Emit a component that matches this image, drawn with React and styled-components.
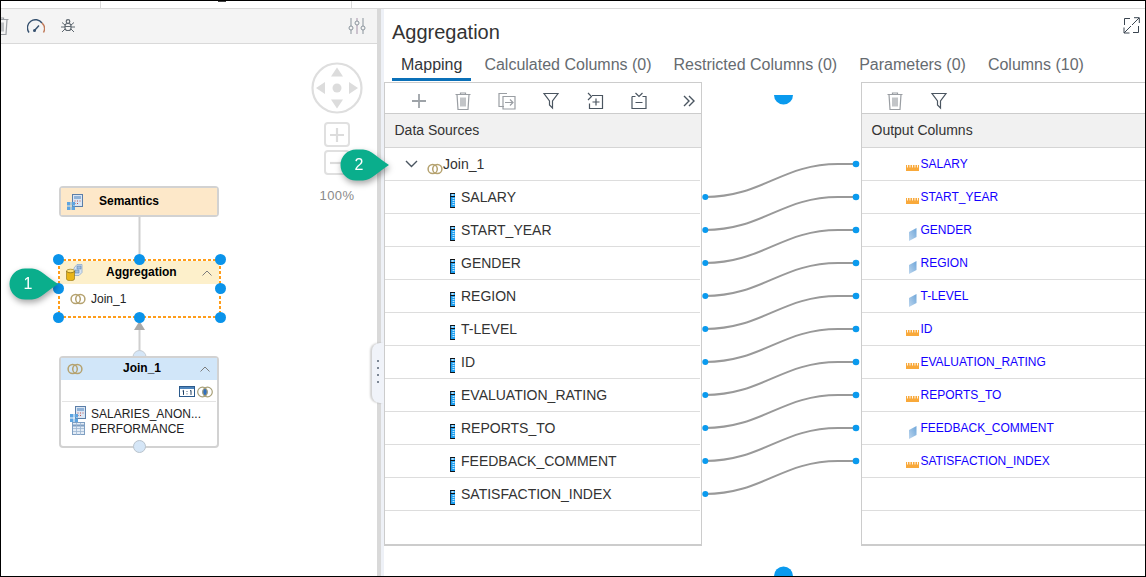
import React from "react";
import styled, { createGlobalStyle } from "styled-components";

const Global = createGlobalStyle`
  html, body { margin: 0; padding: 0; background: #fff; overflow: hidden; }
  * { box-sizing: border-box; }
`;

const Frame = styled.div`
  width: 1146px; height: 577px; border: 1px solid #000; display: flex; flex-direction: column;
  position: relative; overflow: hidden; background: #fff; color: #333;
  font-family: "Liberation Sans", Arial, sans-serif;
`;
const TopStrip = styled.div`
  height: 8px; flex: none; display: flex; border-bottom: 1px solid #d9d9d9;
`;
const TopCell = styled.div`
  width: ${p => p.$w}px; border-right: 1px solid #d9d9d9; display: flex; justify-content: center;
  &:last-child { border-right: 0; flex: 1; }
`;
const TopMark = styled.span`
  width: 8px; height: 1px; margin-right: 8px; background: #444;
`;
const Main = styled.div`
  flex: 1; min-height: 0; display: flex; position: relative;
`;
const LeftPanel = styled.section`
  width: 376px; flex: none; display: flex; flex-direction: column; overflow: hidden;
`;
const CanvasBar = styled.div`
  height: 35px; flex: none; display: flex; align-items: center; gap: 16px; padding: 0 11px 0 0;
  background: #f4f4f4; border-bottom: 1px solid #d9d9d9;
  & > svg:first-child { margin-left: -10px; }
  & > svg:last-child { margin-left: auto; }
`;
const Canvas = styled.div`
  flex: 1; position: relative;
`;
const EdgeLayer = styled.svg`
  position: absolute; left: 0; top: 0; width: 376px; height: 531px;
`;
const NavGroup = styled.div`
  position: absolute; left: 310px; top: 18px; width: 52px; display: flex; flex-direction: column;
  align-items: center;
`;
const ZoomBtn = styled.div`
  width: 26px; height: 25px; margin-top: ${p => p.$mt}px; border: 2px solid #e0e0e0; border-radius: 4px;
  display: flex; align-items: center; justify-content: center;
`;
const ZoomLabel = styled.div`
  margin-top: 13px; font-size: 13px; line-height: 16px; letter-spacing: .4px; color: #8a8a8a;
`;
const Node = styled.div`
  position: absolute; left: ${p => p.$x}px; top: ${p => p.$y}px; width: 160px; height: ${p => p.$h}px;
  border: 2px solid #d2d2d2; border-radius: 4px; background: #fff; display: flex; flex-direction: column;
`;
const NodeHead = styled.div`
  height: ${p => p.$h}px; flex: none; background: ${p => p.$bg}; display: flex; align-items: center;
  padding: 0 6px; position: relative; font-size: 12px; font-weight: 700; color: #000;
`;
const NodeTitle = styled.span`
  position: absolute; left: ${p => p.$left}px; line-height: 14px; margin-top: -2px;
`;
const NodeChevron = styled.svg`
  position: absolute; right: 7px; top: 50%; margin-top: -3px;
`;
const SelectedNode = styled(Node)`
  width: 163px; border: 0; border-radius: 0; padding: 2px;
  background:
    linear-gradient(90deg, #ff9d19 60%, transparent 0) 0 0 / 5px 2px repeat-x,
    linear-gradient(90deg, #ff9d19 60%, transparent 0) 0 100% / 5px 2px repeat-x,
    linear-gradient(0deg, #ff9d19 60%, transparent 0) 0 0 / 2px 5px repeat-y,
    linear-gradient(0deg, #ff9d19 60%, transparent 0) 100% 0 / 2px 5px repeat-y,
    #fff;
`;
const NodeLine = styled.div`
  display: flex; align-items: center; gap: 5px; padding-left: ${p => p.$pl}px; height: ${p => p.$h}px;
  font-size: 12px; color: #222;
`;
const NodeIcons = styled.div`
  display: flex; justify-content: flex-end; align-items: center; gap: 2px; height: 22px; padding: 2px 3px 0 0;
  margin: 0 1px; border-bottom: 1px solid #e4e4e4;
`;
const NodeList = styled.div`
  padding-top: 4px;
`;
const TableSlot = styled.span`
  width: 16px; display: flex; justify-content: center;
`;
const Handle = styled.span`
  position: absolute; left: ${p => p.$x - 5}px; top: ${p => p.$y - 5}px; width: 11px; height: 11px;
  border-radius: 50%; background: #0a93ea;
`;
const Port = styled.span`
  position: absolute; left: 132px; top: 396px; width: 13px; height: 13px; border-radius: 50%;
  background: #d5e6f7; border: 1px solid #b9c3cc;
`;
const Splitter = styled.div`
  width: 7px; flex: none; background: linear-gradient(90deg, #d9d9d9 0 4px, #eef1f7 4px);
`;
const Grip = styled.div`
  position: absolute; left: 371px; top: 334px; width: 12px; height: 60px; background: #f0f3f9;
  border-radius: 8px 0 0 8px; box-shadow: -2px 0 2px rgba(0,0,0,.18); display: flex; flex-direction: column;
  align-items: center; justify-content: center; gap: 5px; padding-bottom: 4px;
`;
const GripDot = styled.i`
  width: 2px; height: 2px; background: #7d8794; display: block;
`;
const RightPanel = styled.section`
  flex: 1; min-width: 0; display: flex; flex-direction: column; position: relative; overflow: hidden;
`;
const Title = styled.h1`
  margin: 11px 0 0 8px; font-size: 20px; line-height: 24px; font-weight: 400; color: #333;
`;
const Expand = styled.svg`
  position: absolute; right: 5px; top: 8px;
`;
const Tabs = styled.nav`
  display: flex; gap: 4px; margin: 6px 0 1px 8px; height: 31px;
`;
const Tab = styled.div`
  padding: 5px 9px 0; font-size: 16px; line-height: 19px; color: ${p => p.$on ? "#32363a" : "#666b70"};
  border-bottom: 3px solid ${p => p.$on ? "#0a70b8" : "transparent"};
`;
const Mapping = styled.div`
  flex: 1; min-height: 0; display: flex; align-items: flex-start;
`;
const MapTable = styled.div`
  width: ${p => p.$w ? p.$w + "px" : "auto"}; flex: ${p => p.$w ? "none" : 1}; height: 464px;
  border: 1px solid #ccc; border-bottom-width: 2px; ${p => !p.$w && "border-right: 0;"}
  display: flex; flex-direction: column; background: #fff; overflow: hidden;
`;
const MapToolbar = styled.div`
  height: 31px; flex: none; display: flex; align-items: center; gap: 24px; padding: 6px 5px 0 ${p => p.$pl}px;
  border-bottom: 1px solid #ccc;
  & > .more { margin-left: auto; }
`;
const MapHead = styled.div`
  height: 34px; flex: none; display: flex; align-items: center; padding: 0 0 2px 9.5px; background: #f1f1f1;
  border-bottom: 1px solid #d5d5d5; font-size: 14px; color: #333;
`;
const Row = styled.div`
  height: 33px; flex: none; display: flex; align-items: center; border-bottom: 1px solid #ddd;
  padding-left: ${p => p.$pl}px; margin-right: ${p => p.$inset ? 1 : 0}px;
`;
const SourceName = styled.span`
  font-size: 14px; line-height: 16px; color: #333; margin-left: ${p => p.$ml}px;
`;
const OutputName = styled.span`
  font-size: 12px; line-height: 14px; color: #1400ff; margin-left: 1.5px;
`;
const IconSlot = styled.span`
  width: 13px; height: 13px; display: flex; justify-content: center; align-items: flex-start; margin-top: ${p => p.$mt}px;
`;
const MeasureSlot = styled.span`
  width: 5px; height: 15px; display: flex; margin-top: 7px;
`;
const RingSlot = styled.span`
  display: flex; margin: 9px 0 0 9px;
`;
const Links = styled.svg`
  width: 159px; height: 494px; flex: none; display: block;
`;
const Callout = styled.div`
  position: absolute; left: ${p => p.$x}px; top: ${p => p.$y}px; width: 49px; height: 32px;
  filter: drop-shadow(1px 3px 3px rgba(0,0,0,.35)); display: flex; align-items: center;
`;
const CalloutShape = styled.svg`
  position: absolute; left: 0; top: 0;
`;
const CalloutNum = styled.span`
  position: relative; width: 38px; text-align: center; font-size: 16px; color: #fff;
`;

const grayStroke = { fill: "none", stroke: "#9a9ea3", strokeWidth: 1.2 };
const darkStroke = { fill: "none", stroke: "#4a5560", strokeWidth: 1.2 };

const Rings = ({ c = "#b5a26f" }) => (
  <svg width="16" height="12" viewBox="0 0 16 12">
    <circle cx="5.7" cy="6" r="4.6" fill="none" stroke={c} strokeWidth="1.5" />
    <circle cx="10.3" cy="6" r="4.6" fill="none" stroke={c} strokeWidth="1.5" />
  </svg>
);
const CalcIcon = () => (
  <svg width="16" height="16" viewBox="0 0 16 16">
    <rect x="5.5" y="0.5" width="10" height="12" fill="#dbe6f3" stroke="#5b7ea8" />
    <rect x="7" y="2" width="7" height="3" fill="#8fb2d8" />
    <path d="M7.5 7h1M10 7h1M12.5 7h1M7.5 9.5h1M10 9.5h1" stroke="#c0504d" />
    <path d="M0 8h3.5v3.5H0zM4.5 8H8v3.5H4.5zM0 12.5h3.5V16H0zM4.5 12.5H8V16H4.5z" fill="#5ea4e0" />
  </svg>
);
const AggIcon = () => (
  <svg width="17" height="17" viewBox="0 0 17 17">
    <path d="M8 4l3-3.500h5v8l-3 3H8z" fill="#d7e4f3" stroke="#8fa9c9" strokeWidth=".8" />
    <path d="M11 2h4v3h-4zM9 6h4v3H9z" fill="#9dbde0" stroke="#5f87b5" strokeWidth=".6" />
    <ellipse cx="4.500" cy="7" rx="4" ry="1.800" fill="#ffe27a" stroke="#8a6d10" strokeWidth=".6" />
    <path d="M.5 7v8c0 1 1.800 1.700 4 1.700s4-.7 4-1.700V7c0 1-1.800 1.800-4 1.800S.5 8 .5 7z" fill="#e9b518" stroke="#8a6d10" strokeWidth=".6" />
  </svg>
);
const TableIcon = () => (
  <svg width="13" height="13" viewBox="0 0 13 13">
    <rect x=".5" y=".5" width="12" height="12" fill="#e3ecf6" stroke="#7f9fc2" />
    <path d="M.5 3.500h12" stroke="#7f9fc2" strokeWidth="2" />
    <path d="M4.500 1v12M8.500 1v12M1 6.500h11M1 9.500h11" stroke="#9db6d2" strokeWidth=".8" />
  </svg>
);
const OneOneIcon = () => (
  <svg width="16" height="11" viewBox="0 0 16 11">
    <rect x=".5" y=".5" width="15" height="10" fill="#fff" stroke="#2b5a8c" />
    <path d="M1 1h14v2H1z" fill="#4f86bd" />
    <path d="M3.500 5l1-.6v4.500M8 5v.8M8 7.500v.8M11 5l1-.6v4.500" fill="none" stroke="#1e3f63" />
  </svg>
);
const InnerJoinIcon = () => (
  <svg width="16" height="12" viewBox="0 0 16 12">
    <path d="M8 1.700a4.800 4.800 0 0 1 0 8.600a4.800 4.800 0 0 1 0-8.600z" fill="#2f6fc0" />
    <circle cx="5.500" cy="6" r="4.800" fill="none" stroke="#a8a078" strokeWidth="1.200" />
    <circle cx="10.500" cy="6" r="4.800" fill="none" stroke="#a8a078" strokeWidth="1.200" />
  </svg>
);
const Chevron = () => (
  <NodeChevron width="10" height="6" viewBox="0 0 10 6">
    <path d="M.5 5.500L5 1l4.500 4.500" fill="none" stroke="#7d7d7d" strokeWidth="1" />
  </NodeChevron>
);
const Measure = () => (
  <svg width="5" height="15" viewBox="0 0 5 15">
    <rect width="5" height="15" fill="#1d9ff0" />
    <path d="M0 .5h5M0 14.500h5M0 3.500h5" stroke="#111" />
    <path d="M.5 0v15" stroke="#123" strokeWidth=".8" />
    <rect x="1.500" y="1.200" width="2.200" height="1.500" fill="#e8f5ff" />
    <path d="M2.500 5.500h2M2.500 7.500h2M2.500 9.500h2M2.500 11.500h2" stroke="#e8f5ff" strokeWidth=".8" />
  </svg>
);
const Ruler = () => (
  <svg width="13" height="7" viewBox="0 0 13 7">
    <rect y="1" width="13" height="6" fill="#f9a93a" />
    <path d="M1.500 1v2.500M4 1v2.500M6.500 1v2.500M9 1v2.500M11.500 1v2.500" stroke="#fff" strokeWidth=".9" />
  </svg>
);
const Attribute = ({ id }) => (
  <svg width="8" height="13" viewBox="0 0 8 13">
    <defs>
      <linearGradient id={id} x1="0" y1="1" x2="1" y2="0">
        <stop offset="0" stopColor="#bdd6ee" />
        <stop offset="1" stopColor="#6ea6d9" />
      </linearGradient>
    </defs>
    <path d="M0 4l7.500-4v9L0 13z" fill={`url(#${id})`} />
  </svg>
);
const Trash = () => (
  <svg width="20" height="18" viewBox="0 0 20 18">
    <path d="M2.500 2.500h15M7.500 2.500V1h5v1.500" {...grayStroke} />
    <path d="M4 2.500l1 15h10l1-15zM8 5.500v9M10 5.500v9M12 5.500v9" {...grayStroke} />
  </svg>
);
const Plus = () => (
  <svg width="20" height="18" viewBox="0 0 20 18">
    <path d="M10 2v14M3 9h14" fill="none" stroke="#9ea3a8" strokeWidth="1.800" />
  </svg>
);
const ImportIcon = () => (
  <svg width="20" height="18" viewBox="0 0 20 18">
    <path d="M7 1.500H2v13h5M7 1.500h3M6 4.500h12v12.500H6zM8 10.500h8M13 7.500l3 3-3 3" {...grayStroke} />
  </svg>
);
const Filter = () => (
  <svg width="20" height="18" viewBox="0 0 20 18">
    <path d="M3 1.500h14l-5.500 7.500v7l-3-3V9z" {...darkStroke} />
  </svg>
);
const AddCol = () => (
  <svg width="20" height="18" viewBox="0 0 20 18">
    <path d="M7 3.500h10.500v13h-13v-5M3 1l3.500 3.500L3 8M11 6.500v7M7.500 10h7" {...darkStroke} />
  </svg>
);
const RemCol = () => (
  <svg width="20" height="18" viewBox="0 0 20 18">
    <path d="M3 4.500v12h14v-12h-3.500M6.500 4.500H3M6.500 1l3.500 3.500L13.500 1M6.500 10.500h7" {...darkStroke} />
  </svg>
);
const More = () => (
  <svg className="more" width="14" height="14" viewBox="0 0 14 14">
    <path d="M2 2l5 5-5 5M7 2l5 5-5 5" fill="none" stroke="#4a5560" strokeWidth="1.400" />
  </svg>
);
const ChevronDown = () => (
  <svg width="13" height="8" viewBox="0 0 13 8">
    <path d="M1 1l5.500 5.500L12 1" fill="none" stroke="#4a5560" strokeWidth="1.400" />
  </svg>
);
const Gauge = () => (
  <svg width="18" height="14" viewBox="0 0 18 14">
    <path d="M2 13.500A8 8 0 0 1 15 4" fill="none" stroke="#35506e" strokeWidth="1.400" />
    <path d="M15 4A8 8 0 0 1 16.500 13.500" fill="none" stroke="#c07a5a" strokeWidth="1.400" />
    <path d="M7.500 11.500L12 6.500" stroke="#35506e" strokeWidth="1.400" />
    <circle cx="7.500" cy="11.500" r="1.500" fill="#35506e" />
  </svg>
);
const Bug = () => (
  <svg width="14" height="14" viewBox="0 0 14 14">
    <circle cx="7" cy="2.500" r="1.800" fill="none" stroke="#5f6870" strokeWidth="1.200" />
    <rect x="4" y="4.500" width="6" height="7" rx="2.500" fill="none" stroke="#5f6870" strokeWidth="1.200" />
    <path d="M1 3.500l3 2.500M13 3.500l-3 2.500M0 8h4M14 8h-4M1 13l3-3M13 13l-3-3M4 7.500h6" fill="none" stroke="#5f6870" strokeWidth="1" />
  </svg>
);
const Sliders = () => (
  <svg width="18" height="16" viewBox="0 0 18 16">
    <path d="M3 0v8M3 12v4" stroke="#8a949c" fill="none" />
    <circle cx="3" cy="10" r="2" fill="none" stroke="#8a949c" />
    <path d="M9 0v3M9 7v9" stroke="#a592a8" fill="none" />
    <circle cx="9" cy="5" r="2" fill="none" stroke="#8a949c" />
    <path d="M15 0v8M15 12v4" stroke="#8a949c" fill="none" />
    <circle cx="15" cy="10" r="2" fill="none" stroke="#8a949c" />
  </svg>
);
const NavPad = () => (
  <svg width="52" height="52" viewBox="0 0 52 52">
    <circle cx="26" cy="26" r="24.500" fill="#fff" stroke="#dedede" strokeWidth="2.200" />
    <path d="M26 5.500l6 9H20zM26 46.500l-6-9h12zM5 26l9-6v12zM47 26l-9 6V20z" fill="#dcdcdc" />
    <circle cx="26" cy="26" r="4.500" fill="#dcdcdc" />
  </svg>
);
const ExpandIcon = () => (
  <Expand width="17" height="17" viewBox="0 0 17 17">
    <path d="M7 1.500H1.500V8M10 15.500h5.500V9" fill="none" stroke="#3a4550" />
    <path d="M9 8l7-7M11 .7h5.300V6M8 9l-7 7M1 10.500V16h5.500" fill="none" stroke="#3a4550" />
  </Expand>
);
const CalloutBadge = ({ x, y, n }) => (
  <Callout $x={x} $y={y}>
    <CalloutShape width="49" height="32" viewBox="0 0 49 32">
      <path d="M16 .5H23C31 .5 39 10 49 16C39 22 31 31.500 23 31.500H16A15.500 15.500 0 0 1 16 .5Z" fill="#0aae8c" />
    </CalloutShape>
    <CalloutNum>{n}</CalloutNum>
  </Callout>
);

const sources = ["SALARY", "START_YEAR", "GENDER", "REGION", "T-LEVEL", "ID", "EVALUATION_RATING", "REPORTS_TO", "FEEDBACK_COMMENT", "SATISFACTION_INDEX"];
const attrs = new Set(["GENDER", "REGION", "T-LEVEL", "FEEDBACK_COMMENT"]);
const handles = [[57, 215], [138, 215], [219, 215], [57, 244], [219, 244], [57, 273], [138, 273], [219, 273]];

export default function App() {
  return (
    <Frame>
      <Global />
      <TopStrip>
        <TopCell $w={100} />
        <TopCell $w={251}><TopMark /></TopCell>
        <TopCell />
      </TopStrip>
      <Main>
        <LeftPanel>
          <CanvasBar>
            <Trash />
            <Gauge />
            <Bug />
            <Sliders />
          </CanvasBar>
          <Canvas>
            <EdgeLayer viewBox="0 0 376 531">
              <path d="M138.500 172v45" stroke="#cfcfcf" strokeWidth="2" />
              <path d="M138.500 285v30" stroke="#cfcfcf" strokeWidth="2" />
              <path d="M133 286h11l-5.500-9z" fill="#a9a9a9" />
              <circle cx="138.500" cy="268" r="6.500" fill="#fff" stroke="#d5d5d5" />
              <circle cx="138.500" cy="313" r="6.500" fill="#d5e6f7" stroke="#c5ccd3" />
            </EdgeLayer>
            <NavGroup>
              <NavPad />
              <ZoomBtn $mt={8}>
                <svg width="16" height="16" viewBox="0 0 16 16"><path d="M8 1v14M1 8h14" stroke="#dcdcdc" strokeWidth="2.200" /></svg>
              </ZoomBtn>
              <ZoomBtn $mt={3}>
                <svg width="16" height="16" viewBox="0 0 16 16"><path d="M1 8h14" stroke="#dcdcdc" strokeWidth="2.200" /></svg>
              </ZoomBtn>
              <ZoomLabel>100%</ZoomLabel>
            </NavGroup>
            <Node $x={58} $y={142} $h={31}>
              <NodeHead $h={27} $bg="#fde8c9">
                <CalcIcon />
                <NodeTitle $left={38}>Semantics</NodeTitle>
              </NodeHead>
            </Node>
            <SelectedNode $x={57} $y={215} $h={59}>
              <NodeHead $h={23} $bg="#fdf0cb">
                <AggIcon />
                <NodeTitle $left={46}>Aggregation</NodeTitle>
                <Chevron />
              </NodeHead>
              <NodeLine $pl={10} $h={30}>
                <Rings />
                <span>Join_1</span>
              </NodeLine>
            </SelectedNode>
            <Node $x={58} $y={312} $h={92}>
              <NodeHead $h={22} $bg="#d1e6f9">
                <Rings />
                <NodeTitle $left={62}>Join_1</NodeTitle>
                <Chevron />
              </NodeHead>
              <NodeIcons>
                <OneOneIcon />
                <InnerJoinIcon />
              </NodeIcons>
              <NodeList>
                <NodeLine $pl={9} $h={15}>
                  <CalcIcon />
                  <span>SALARIES_ANON...</span>
                </NodeLine>
                <NodeLine $pl={9} $h={15}>
                  <TableSlot><TableIcon /></TableSlot>
                  <span>PERFORMANCE</span>
                </NodeLine>
              </NodeList>
            </Node>
            <Port />
            {handles.map(([x, y]) => <Handle key={`${x}-${y}`} $x={x} $y={y} />)}
          </Canvas>
        </LeftPanel>
        <Splitter />
        <RightPanel>
          <Title>Aggregation</Title>
          <ExpandIcon />
          <Tabs>
            <Tab $on>Mapping</Tab>
            <Tab>Calculated Columns (0)</Tab>
            <Tab>Restricted Columns (0)</Tab>
            <Tab>Parameters (0)</Tab>
            <Tab>Columns (10)</Tab>
          </Tabs>
          <Mapping>
            <MapTable $w={318}>
              <MapToolbar $pl={24}>
                <Plus /><Trash /><ImportIcon /><Filter /><AddCol /><RemCol /><More />
              </MapToolbar>
              <MapHead>Data Sources</MapHead>
              <Row $pl={20} $inset>
                <ChevronDown />
                <RingSlot><Rings /></RingSlot>
                <SourceName $ml={0}>Join_1</SourceName>
              </Row>
              {sources.map(s => (
                <Row key={s} $pl={65} $inset>
                  <MeasureSlot><Measure /></MeasureSlot>
                  <SourceName $ml={6}>{s}</SourceName>
                </Row>
              ))}
            </MapTable>
            <Links viewBox="702 82 159 494">
              <path d="M774 95h19a9.500 9.500 0 0 1-19 0z" fill="#0a9aee" />
              <circle cx="783.500" cy="576" r="9.500" fill="#0a9aee" />
              {sources.map((_, i) => {
                const yl = 197 + i * 33;
                const yr = yl - 33;
                return (
                  <g key={i}>
                    <path d={`M705 ${yl}C762 ${yl} 782 ${yr} 838 ${yr}H856`} fill="none" stroke="#999" strokeWidth="2" />
                    <circle cx="705.300" cy={yl} r="3" fill="#0a9aee" />
                    <circle cx="856" cy={yr} r="3.300" fill="#0a9aee" />
                  </g>
                );
              })}
            </Links>
            <MapTable>
              <MapToolbar $pl={23}>
                <Trash /><Filter />
              </MapToolbar>
              <MapHead>Output Columns</MapHead>
              {sources.map(s => (
                <Row key={s} $pl={44}>
                  <IconSlot $mt={attrs.has(s) ? 9 : 13}>{attrs.has(s) ? <Attribute id={`attr-${s}`} /> : <Ruler />}</IconSlot>
                  <OutputName>{s}</OutputName>
                </Row>
              ))}
              <Row $pl={44} />
            </MapTable>
          </Mapping>
        </RightPanel>
        <Grip>
          <GripDot /><GripDot /><GripDot /><GripDot />
        </Grip>
      </Main>
      <CalloutBadge x={8} y={267} n="1" />
      <CalloutBadge x={339} y={148} n="2" />
    </Frame>
  );
}
